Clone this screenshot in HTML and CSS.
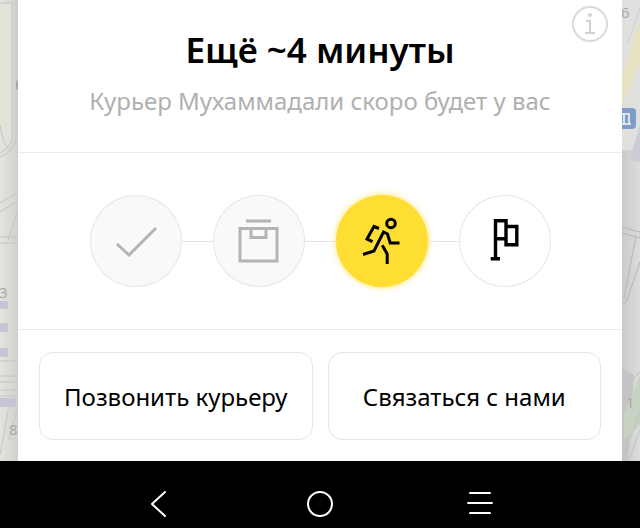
FILE: index.html
```html
<!DOCTYPE html>
<html lang="ru">
<head>
    <meta charset="UTF-8">
    <meta name="viewport" content="width=device-width, initial-scale=1.0">
    <title>Статус заказа</title>
    <link rel="stylesheet" href="styles.css">
</head>
<body>
    <main class="screen">
        <svg class="map" viewBox="0 0 18 461" preserveAspectRatio="xMinYMin slice" aria-hidden="true">
            <defs>
                <linearGradient id="shade-left" x1="0" x2="1" y1="0" y2="0">
                    <stop offset="0" stop-color="#e3e3df"/>
                    <stop offset="1" stop-color="#d0d0cd"/>
                </linearGradient>
            </defs>
            <rect width="18" height="461" fill="url(#shade-left)"/>
            <path d="M0 3H12V138Q10 148 0 153Z" fill="#e2e2d9"/>
            <g fill="none" stroke="#c4c4c8">
                <path d="M0 3H12V138Q10 148 0 153M16 0V140Q14 152 0 157M0 125Q3 145 10 150"/>
                <path d="M0 203L18 192M0 212L18 201M0 237H18M0 243H18M8 240L18 210"/>
                <path d="M0 361H18M0 376H18M0 382H18M0 390H18M0 396H18M0 455L8 411M9 440L18 406"/>
            </g>
            <g fill="#c5c5d3">
                <rect y="301" width="8" height="8"/>
                <rect y="323" width="8" height="9"/>
                <rect y="348" width="8" height="9"/>
                <rect y="398" width="16" height="9"/>
            </g>
            <ellipse cx="18" cy="85" rx="2" ry="5" fill="#a5a5a5"/>
            <text class="map-label" x="-1" y="298">3</text>
            <text class="map-label" x="9" y="435">8</text>
        </svg>

        <section class="card">
            <button class="info" type="button" aria-label="Информация">
                <svg viewBox="0 0 36 36">
                    <circle cx="18" cy="18" r="17" fill="none" stroke="#dadada" stroke-width="2"/>
                    <circle cx="18" cy="9" r="2" fill="#d2d2d2"/>
                    <path d="M14 15H18V27M13 27H23" fill="none" stroke="#d2d2d2" stroke-width="2"/>
                </svg>
            </button>

            <header class="status">
                <h1>Ещё ~4 минуты</h1>
                <p>Курьер Мухаммадали скоро будет у вас</p>
            </header>

            <ol class="steps">
                <li class="step done">
                    <svg viewBox="0 0 92 92">
                        <path d="M27 49L39 60L66 33" stroke-width="3"/>
                    </svg>
                </li>
                <li class="step done">
                    <svg viewBox="0 0 92 92">
                        <path d="M33 26H58M27 33.5H64V66H27ZM38 33V42.5H53V33" stroke-width="3"/>
                    </svg>
                </li>
                <li class="step active">
                    <svg viewBox="0 0 92 92">
                        <circle cx="55" cy="28.5" r="4.3" stroke-width="3"/>
                        <path d="M43 33.5L38 31.5L31 44L36.5 46.7" stroke-width="3"/>
                        <path d="M27 59.5L38 56L47.5 37L51.5 39L54.2 48H63.5" stroke-width="3"/>
                        <path d="M46.2 50.3L51.2 59V69" stroke-width="3"/>
                    </svg>
                </li>
                <li class="step">
                    <svg viewBox="0 0 92 92">
                        <path d="M36.5 64V25.7H47V31M36.5 43.7H47M47 31.5H57.8V49.7H47ZM31.7 63.7H41" stroke-width="3.4"/>
                    </svg>
                </li>
            </ol>

            <div class="actions">
                <button type="button">Позвонить курьеру</button>
                <button type="button">Связаться с нами</button>
            </div>
        </section>

        <svg class="map" viewBox="0 0 18 461" preserveAspectRatio="xMinYMin slice" aria-hidden="true">
            <defs>
                <linearGradient id="shade-right" x1="0" x2="1" y1="0" y2="0">
                    <stop offset="0" stop-color="#cacac8"/>
                    <stop offset="1" stop-color="#dcdcda"/>
                </linearGradient>
            </defs>
            <rect width="18" height="461" fill="#e0e0de"/>
            <rect y="150" width="18" height="311" fill="url(#shade-right)"/>
            <path d="M18 20L0 75V106L18 62Z" fill="#e6e1c0"/>
            <path d="M18 125L7 160L18 162Z" fill="#ccccd8"/>
            <path d="M0 368L12 375L6 461H0Z" fill="#c4c4c6"/>
            <path d="M18 375L2 415V440L18 425Z" fill="#c7d2c3"/>
            <g fill="none" stroke="#b5b5b7">
                <path d="M0 227L18 232M0 233L18 238M14 236L2 298M18 262L6 297Q3 305 0 304"/>
                <path d="M18 412L2 455M18 430L7 461M10 380L18 372" stroke="#bfc2bf"/>
                <path d="M5 45L18 8M9 160L18 134" stroke="#cfcfd6"/>
            </g>
            <rect x="-8" y="108" width="22" height="21" rx="4" fill="#7f9cca"/>
            <path d="M0 114H7V124M2 114V124M0 124H9" fill="none" stroke="#dde4ee" stroke-width="2"/>
            <text class="map-label" x="-1" y="18">6</text>
            <text class="map-label" x="4" y="408">1</text>
        </svg>
    </main>

    <nav class="system-bar">
        <button type="button" aria-label="Назад">
            <svg viewBox="0 0 32 32"><path d="M21 4L8 16L21 28"/></svg>
        </button>
        <button type="button" aria-label="Домой">
            <svg viewBox="0 0 32 32"><circle cx="16" cy="16" r="12"/></svg>
        </button>
        <button type="button" aria-label="Меню">
            <svg viewBox="0 0 32 32"><path d="M6 5H26M4 15H28M6 25H26"/></svg>
        </button>
    </nav>
</body>
</html>
```
FILE: styles.css
```css
* {
    box-sizing: border-box;
}
body {
    margin: 0;
    min-height: 100vh;
    display: flex;
    flex-direction: column;
    font-family: "Noto Sans", sans-serif;
    background: #000;
    color: #000;
}
h1, p, ol {
    margin: 0;
    padding: 0;
}
button {
    font-family: inherit;
    color: inherit;
    background: none;
    border: none;
    padding: 0;
    cursor: pointer;
}
svg {
    display: block;
}
.screen {
    flex: 1;
    display: grid;
    grid-template-columns: 18px 1fr 18px;
    background: #d4d4d2;
}
.map {
    width: 100%;
    height: 100%;
}
.map-label {
    font-size: 15px;
    fill: #aaaaab;
}
.card {
    position: relative;
    background: #fff;
}
.info {
    position: absolute;
    top: 6px;
    right: 14px;
    width: 36px;
    height: 36px;
}
/* Заголовок */
.status {
    padding: 28px 20px 34px;
    text-align: center;
    border-bottom: 1px solid #ebebeb;
}
.status h1 {
    font-size: 35px;
    line-height: 44px;
    font-weight: 600;
}
.status p {
    margin-top: 12px;
    font-size: 24px;
    line-height: 34px;
    color: #b0b0b0;
}
/* Этапы доставки */
.steps {
    display: flex;
    justify-content: center;
    padding: 42px 20px;
    list-style: none;
    border-bottom: 1px solid #ebebeb;
}
.step {
    display: flex;
    align-items: center;
}
.step + .step::before {
    content: "";
    width: 31px;
    height: 1px;
    background: #e4e4e4;
}
.step svg {
    width: 92px;
    height: 92px;
    border-radius: 50%;
    box-shadow: inset 0 0 0 1px #e6e6e6;
    fill: none;
    stroke: #000;
}
.done svg {
    background: #f9f9f9;
    stroke: #b4b4b4;
}
.active svg {
    background: #ffde33;
    box-shadow: 0 0 6px #ffe35c;
}
/* Кнопки */
.actions {
    display: grid;
    grid-template-columns: 1fr 1fr;
    gap: 15px;
    padding: 22px 21px 21px;
}
.actions button {
    height: 88px;
    border: 1px solid #e6e6e6;
    border-radius: 14px;
    font-size: 24px;
}
/* Системная панель */
.system-bar {
    display: grid;
    grid-template-columns: repeat(3, 1fr);
    justify-items: center;
    padding: 27px 12.5% 8px;
    background: #000;
}
.system-bar button {
    width: 32px;
    height: 32px;
}
.system-bar svg {
    fill: none;
    stroke: #fff;
    stroke-width: 2;
    stroke-linecap: round;
    stroke-linejoin: round;
}
```
